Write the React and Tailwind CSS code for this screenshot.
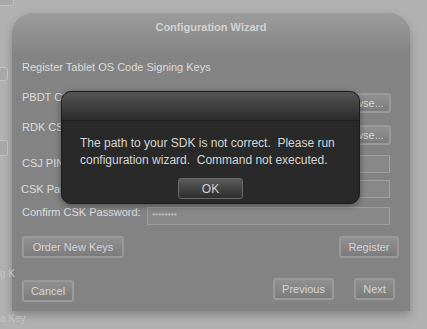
const FONT = { fontFamily: '"Liberation Sans", Arial, sans-serif' }

function GrayButton({ children, className = "" }) {
  return (
    <div
      className={`flex items-center justify-center rounded-[3px] border-2 border-[#9a9a9a] bg-gradient-to-b from-[#909090] to-[#7c7c7c] text-[11px] text-[#d4d4d4] ${className}`}
    >
      {children}
    </div>
  )
}

function Field({ children, className = "" }) {
  return (
    <div className={`ml-auto mr-[20px] flex h-[18px] w-[243px] items-center border border-[#9e9e9e] bg-[#888888] pl-[4px] text-[8px] text-[#cfcfcf] ${className}`}>
      {children}
    </div>
  )
}

export default function App() {
  return (
    <div className="relative h-[329px] w-[427px] overflow-hidden bg-[#b1b1b1]" style={FONT}>
      {/* faint remains of the window behind */}
      <div className="absolute left-[-6px] top-[-6px] h-[12px] w-[20px] rounded-[3px] border border-[#c0c0c0] bg-[#a8a8a8]" />
      <div className="absolute left-[-6px] top-[67px] h-[14px] w-[14px] rounded-[3px] border border-[#c0c0c0] bg-[#a8a8a8]" />
      <div className="absolute left-[-6px] top-[140px] h-[16px] w-[14px] rounded-[3px] border border-[#c0c0c0] bg-[#a8a8a8]" />
      <div className="absolute left-0 top-[266px] text-[10px] text-[#c4c4c4]">g K</div>
      <div className="absolute left-0 top-[311px] text-[10px] text-[#c4c4c4]">a Key</div>

      <div className="ml-[12px] mt-[13px] flex h-[298px] w-[398px] flex-col rounded-t-[22px] bg-[#838383] shadow-[0_4px_10px_rgba(0,0,0,0.25)]">
        <div className="flex h-[42px] justify-center rounded-t-[22px] bg-gradient-to-b from-[#9c9c9c] to-[#838383] pt-[8px] text-[11px] font-bold leading-[13px] text-[#d2d2d2]">
          Configuration Wizard
        </div>

        <div className="flex flex-col pl-[10px] text-[11px] leading-[16px] text-[#dcdcdc]">
          <div className="mt-[4px] h-[16px]">Register Tablet OS Code Signing Keys</div>

          <div className="mt-[14px] flex items-start">
            <span>PBDT CSJ File:</span>
            <GrayButton className="ml-auto mr-[19px] mt-[4px] h-[20px] w-[60px]">Browse...</GrayButton>
          </div>

          <div className="mt-[6px] flex items-start">
            <span>RDK CSJ File:</span>
            <GrayButton className="ml-auto mr-[19px] mt-[6px] h-[20px] w-[60px]">Browse...</GrayButton>
          </div>

          <div className="mt-[10px] flex items-start">
            <span>CSJ PIN:</span>
            <Field />
          </div>

          <div className="mt-[7px] flex items-start">
            <span className="ml-[-1px] mt-[1px]">CSK Password:</span>
            <Field />
          </div>

          <div className="mt-[6px] flex items-start">
            <span>Confirm CSK Password:</span>
            <Field className="mt-[3px]">********</Field>
          </div>

          <div className="mr-[10px] mt-[11px] flex justify-between">
            <GrayButton className="h-[22px] w-[102px]">Order New Keys</GrayButton>
            <GrayButton className="mr-[1px] h-[22px] w-[60px]">Register</GrayButton>
          </div>

          <div className="mr-[10px] mt-[20px] flex items-start">
            <GrayButton className="mt-[2px] h-[22px] w-[52px]">Cancel</GrayButton>
            <GrayButton className="ml-auto h-[22px] w-[61px]">Previous</GrayButton>
            <GrayButton className="ml-[20px] mr-[5px] h-[22px] w-[41px]">Next</GrayButton>
          </div>
        </div>
      </div>

      {/* error dialog overlay */}
      <div className="absolute left-[61px] top-[91px] flex h-[113px] w-[299px] flex-col overflow-hidden rounded-[10px] border border-[#1c1c1c] bg-[#292929] shadow-[0_2px_6px_rgba(0,0,0,0.4)]">
        <div className="h-[29px] border-b border-[#1e1e1e] bg-gradient-to-b from-[#555555] to-[#2c2c2c]" />
        <div className="px-[18px] pt-[14px] text-[12px] leading-[17px] text-[#d6d6d6]">
          <p>The path to your SDK is not correct.&nbsp; Please run</p>
          <p>configuration wizard.&nbsp; Command not executed.</p>
        </div>
        <div className="mt-[9px] flex justify-center">
          <div className="flex h-[21px] w-[65px] items-center justify-center rounded-[3px] border border-[#6a6a6a] bg-gradient-to-b from-[#5a5a5a] to-[#2e2e2e] text-[12px] text-[#d0d0d0]">
            OK
          </div>
        </div>
      </div>
    </div>
  )
}
